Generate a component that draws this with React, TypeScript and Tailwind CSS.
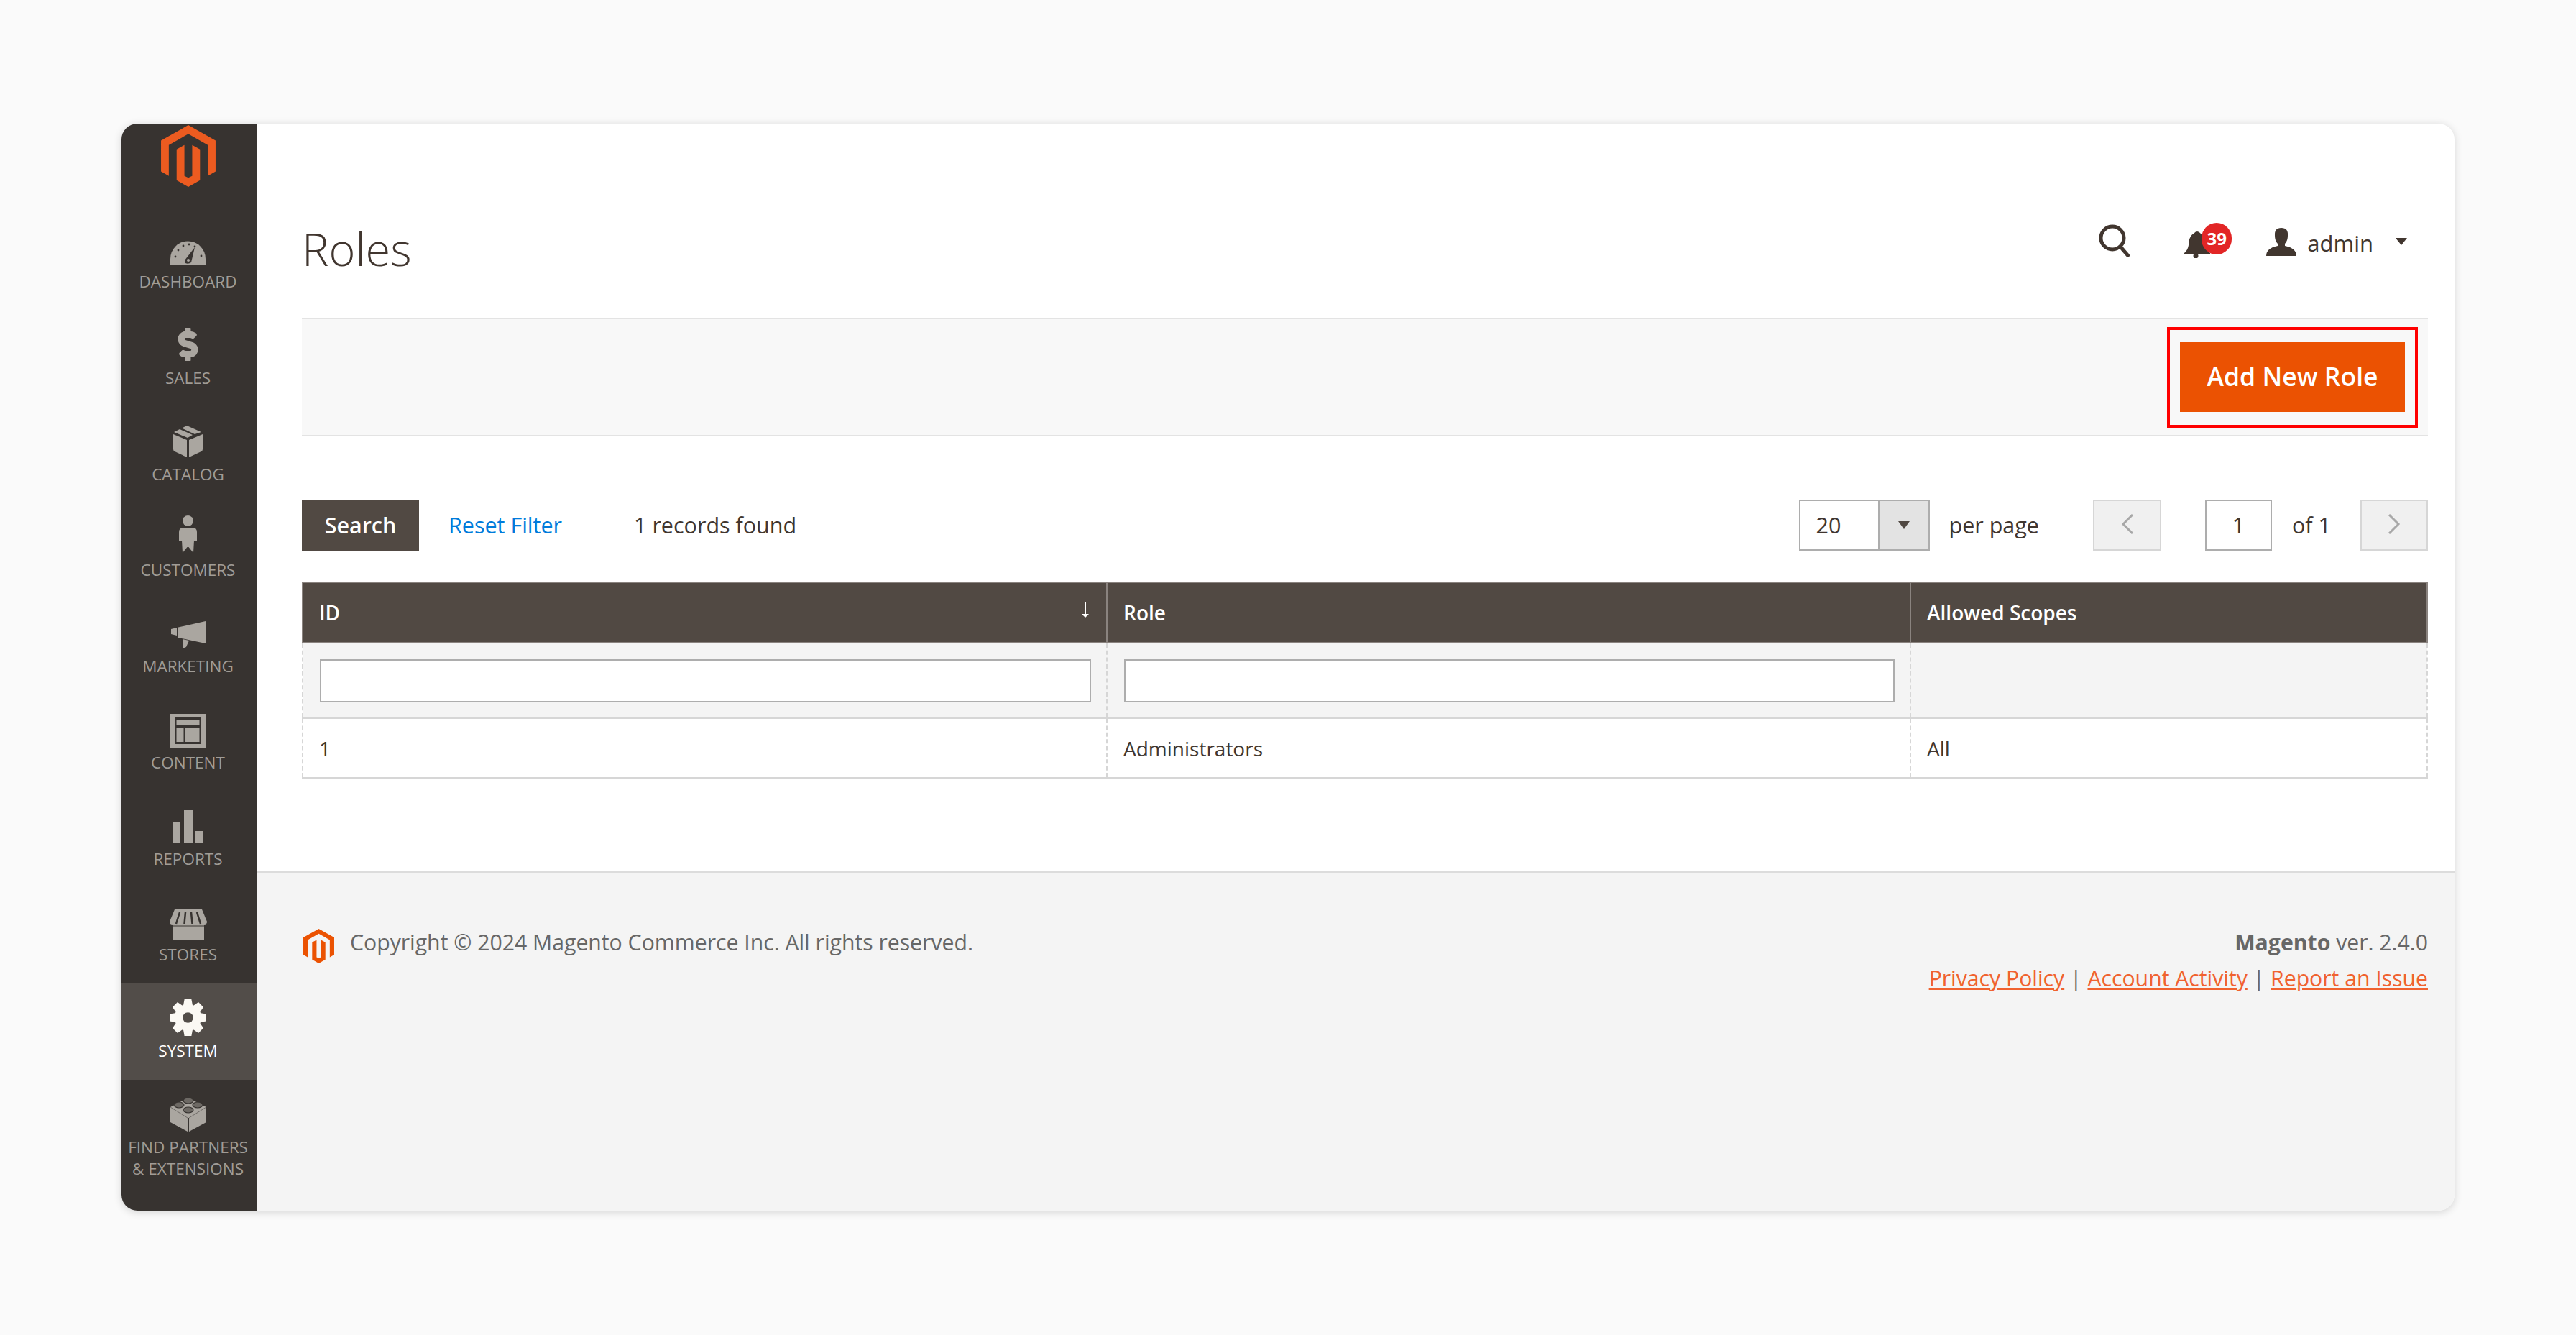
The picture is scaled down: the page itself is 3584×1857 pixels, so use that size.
import type { ReactNode } from "react";
import { FaDollarSign } from "react-icons/fa";

const ICON = "#aaa6a0";
const SIDE = "#373330";

function MagentoLogo({ className }: { className: string }) {
  return (
    <svg viewBox="1.6 0 20.8 24" preserveAspectRatio="none" className={className} fill="currentColor">
      <path d="M12 24l-4.455-2.572v-12l2.97-1.715v12.001L12 20.43l1.485-.715V7.713l2.97 1.715v12L12 24zM22.391 6v12l-2.969 1.714V7.713L12 3.43 4.574 7.713v12.001L1.609 18V6L12 0l10.391 6z" />
    </svg>
  );
}

function Dashboard() {
  return (
    <svg viewBox="0 0 49 33" className="w-[49px] h-[33px] mb-[3px]">
      <path d="M0 33V25A24.5 24.5 0 0 1 49 25V33Z" fill={ICON} />
      <g fill={SIDE}>
        <circle cx="7" cy="22" r="1.4" />
        <circle cx="11" cy="13" r="1.4" />
        <circle cx="18" cy="7" r="1.4" />
        <circle cx="26" cy="5" r="1.4" />
        <circle cx="34" cy="8" r="1.4" />
        <circle cx="43" cy="21" r="1.4" />
        <path d="M20 27L34 9 29 30Q25 33 21 31Z" />
      </g>
      <circle cx="25" cy="27" r="2" fill={ICON} />
    </svg>
  );
}

function Catalog() {
  return (
    <svg viewBox="0 0 41 44" className="w-[41px] h-[44px] mb-[3px]" fill={ICON}>
      <path d="M0 12L19 20V44L2 36Q0 35 0 33Z" />
      <path d="M41 12L22 20V44L39 36Q41 35 41 33Z" />
      <path d="M1 9L9 5 27 13 20 17ZM12 3.500L19 0 39 9 30 12Z" />
    </svg>
  );
}

function Customers() {
  return (
    <svg viewBox="0 0 25 52" className="w-[25px] h-[52px] mb-[3px]" fill={ICON}>
      <ellipse cx="12.500" cy="7.500" rx="7.500" ry="7.500" />
      <path d="M6 17H19Q25 17 25 23V35H21L20 52 13.500 44 11.500 44 5 52 4 35H0V23Q0 17 6 17Z" />
    </svg>
  );
}

function Marketing() {
  return (
    <svg viewBox="0 0 48 38" className="w-[48px] h-[38px] mb-[4px]" fill={ICON}>
      <path d="M0 11L8 9V20L0 18Z" />
      <path d="M10 8.500L48 0V31L10 23Z" />
      <path d="M16 25L25 27 21 36 16 38Z" />
    </svg>
  );
}

function Content() {
  return (
    <svg viewBox="0 0 49 47" className="w-[49px] h-[47px]">
      <rect width="49" height="47" fill={ICON} />
      <rect x="6" y="5" width="37" height="37" fill={SIDE} />
      <rect x="8.500" y="8" width="32" height="7" fill={ICON} />
      <rect x="8.500" y="19" width="10" height="20" fill={ICON} />
      <rect x="21" y="19" width="19.500" height="20" fill={ICON} />
    </svg>
  );
}

function Reports() {
  return (
    <svg viewBox="0 0 43 46" className="w-[43px] h-[46px] mb-[1px]" fill={ICON}>
      <rect y="16" width="10" height="30" />
      <rect x="16" width="12" height="46" />
      <rect x="32" y="29" width="11" height="17" />
    </svg>
  );
}

function Stores() {
  return (
    <svg viewBox="0 0 52 42" className="w-[52px] h-[42px]">
      <path d="M7 0H45L52 17Q52 21 48 21H4Q0 21 0 17Z" fill={ICON} />
      <rect x="4" y="17" width="44" height="25" fill={ICON} />
      <path d="M3 22H49V24H3Z" fill={SIDE} opacity="0.5" />
      <path d="M14 4L9 20M22 4L20.500 20M30 4L31.500 20M38 4L43 20" stroke={SIDE} strokeWidth="2.500" />
    </svg>
  );
}

function Gear() {
  const teeth = [0, 45, 90, 135, 180, 225, 270, 315];
  return (
    <svg viewBox="-26 -26 52 52" className="w-[51px] h-[51px]" fill="#fbf9f4">
      <circle r="19" />
      {teeth.map((deg) => (
        <path key={deg} d="M-5 -26H5L7 -15H-7Z" transform={`rotate(${deg})`} />
      ))}
      <circle r="7.500" fill="#524d49" />
    </svg>
  );
}

function Partners() {
  return (
    <svg viewBox="0 0 50 49" className="w-[50px] h-[49px] mb-[1px]">
      <path d="M0 15L25 2 50 15V36L26 49V30L24 30V49L0 36Z" fill={ICON} />
      <path d="M0 15L24 30M50 15L26 30" stroke={SIDE} strokeWidth="0.500" />
      <g fill="#6d6964" stroke={SIDE} strokeWidth="1.200">
        <ellipse cx="25" cy="6" rx="7" ry="4" />
        <ellipse cx="12" cy="12" rx="7" ry="4" />
        <ellipse cx="38" cy="12" rx="7" ry="4" />
        <ellipse cx="25" cy="19" rx="7" ry="4" />
      </g>
    </svg>
  );
}

const menu: { label: ReactNode; icon: ReactNode; active?: boolean }[] = [
  { label: "DASHBOARD", icon: <Dashboard /> },
  {
    label: "SALES",
    icon: <FaDollarSign stroke="currentColor" strokeWidth={24} className="w-[27px] h-[46px] mb-[3px] text-[#aaa6a0]" />,
  },
  { label: "CATALOG", icon: <Catalog /> },
  { label: "CUSTOMERS", icon: <Customers /> },
  { label: "MARKETING", icon: <Marketing /> },
  { label: "CONTENT", icon: <Content /> },
  { label: "REPORTS", icon: <Reports /> },
  { label: "STORES", icon: <Stores /> },
  { label: "SYSTEM", icon: <Gear />, active: true },
  { label: <>FIND PARTNERS<br />&amp; EXTENSIONS</>, icon: <Partners /> },
];

function Sidebar() {
  return (
    <aside className="w-[188px] shrink-0 bg-[#373330] flex flex-col">
      <div className="h-[126px] pr-[3px] flex flex-col items-center">
        <MagentoLogo className="mt-[2px] w-[76px] h-[86px] text-[#ec5b20]" />
        <div className="mt-auto w-[127px] h-[1px] bg-[#736e69]" />
      </div>
      {menu.map((item, i) => (
        <div
          key={i}
          className={`h-[133.75px] pt-[20px] pr-[3px] flex flex-col items-center ${item.active ? "bg-[#524d49]" : ""}`}
        >
          <div className="h-[53px] shrink-0 flex items-end justify-center">{item.icon}</div>
          <div
            className={`mt-[6px] shrink-0 text-center text-[22.5px] leading-[30px] whitespace-nowrap ${item.active ? "text-white" : "text-[#a09c96]"}`}
          >
            {item.label}
          </div>
        </div>
      ))}
    </aside>
  );
}

function Header() {
  return (
    <div className="h-[270px] flex justify-between">
      <h1 className="mt-[132px] text-[63px] leading-[84px] font-light text-[#41362f]">Roles</h1>
      <div className="mt-[139px] h-[48px] pr-[29px] flex items-center text-[#41362f]">
        <svg viewBox="0 0 43 46" className="w-[43px] h-[46px]" fill="none" stroke="currentColor">
          <circle cx="19" cy="19" r="16" strokeWidth="5" />
          <path d="M30 31L42 45" strokeWidth="5" />
        </svg>
        <div className="relative ml-[76px] w-[36px] h-[38px] mt-[10px]">
          <svg viewBox="0 0 36 38" className="w-[36px] h-[38px]" fill="currentColor">
            <path d="M13 4Q18 -2 23 4Q30 8 30 20Q31 27 36 31V33H0V31Q5 27 6 20Q6 8 13 4Z" />
            <circle cx="16" cy="35" r="3.500" />
          </svg>
          <span className="absolute left-[24px] top-[-11px] w-[42px] h-[44px] rounded-full bg-[#e22626] text-white font-bold text-[24px] leading-[44px] text-center">
            39
          </span>
        </div>
        <svg viewBox="0 0 42 39" className="ml-[78px] w-[42px] h-[39px] mt-[2px]" fill="currentColor">
          <path d="M21 0Q31 0 30 11Q30 18 26 22V25Q42 28 42 39H0Q0 28 16 25V22Q12 18 12 11Q11 0 21 0Z" />
        </svg>
        <span className="ml-[15px] text-[31px] leading-[40px] mt-[6px]">admin</span>
        <span className="ml-[31px] mt-[2px] w-0 h-0 border-x-[8px] border-x-transparent border-t-[10px] border-t-[#41362f]" />
      </div>
    </div>
  );
}

function Chevron({ dir }: { dir: "left" | "right" }) {
  return (
    <svg viewBox="0 0 18 28" className="w-[18px] h-[28px] mb-[4px]" fill="none" stroke="#a8a8a8" strokeWidth="3">
      <path d={dir === "left" ? "M16 1L3 14 16 27" : "M2 1L15 14 2 27"} />
    </svg>
  );
}

function Toolbar() {
  return (
    <div className="mt-[88px] h-[71px] flex items-center text-[30.5px] text-[#41362f]">
      <button className="w-[163px] h-[71px] bg-[#514943] text-white font-semibold">Search</button>
      <span className="ml-[41px] text-[#007bdb]">Reset Filter</span>
      <span className="ml-[100px]">1 records found</span>
      <div className="ml-auto flex items-center h-full">
        <div className="w-[182px] h-full flex border-2 border-[#adadad] bg-white">
          <span className="flex-1 pl-[22px] leading-[67px]">20</span>
          <span className="w-[70px] bg-[#e3e3e3] border-l-2 border-[#adadad] flex items-center justify-center">
            <span className="w-0 h-0 border-x-[8px] border-x-transparent border-t-[11px] border-t-[#514943]" />
          </span>
        </div>
        <span className="ml-[27px]">per page</span>
        <span className="ml-[75px] w-[95px] h-full bg-[#f0f0f0] border-2 border-[#d6d6d6] flex items-center justify-center">
          <Chevron dir="left" />
        </span>
        <span className="ml-[61px] w-[93px] h-full bg-white border-2 border-[#adadad] flex items-center justify-center">1</span>
        <span className="ml-[28px]">of 1</span>
        <span className="ml-[41px] w-[94px] h-full bg-[#f0f0f0] border-2 border-[#d6d6d6] flex items-center justify-center">
          <Chevron dir="right" />
        </span>
      </div>
    </div>
  );
}

function RolesTable() {
  return (
    <table className="mt-[43px] w-full table-fixed border-collapse text-[28px] text-[#41362f]">
      <colgroup>
        <col className="w-[1119px]" />
        <col className="w-[1118px]" />
        <col />
      </colgroup>
      <thead>
        <tr className="h-[84px] bg-[#514943] text-white text-left">
          <th className="relative px-[22px] font-semibold border-2 border-[#8a837f]">
            ID
            <svg viewBox="0 0 12 22" className="absolute right-[23px] top-[26px] w-[12px] h-[22px]" fill="none" stroke="#ffffff">
              <path d="M6 0V20" strokeWidth="2" />
              <path d="M1 17H11L6 22Z" fill="#ffffff" stroke="none" />
            </svg>
          </th>
          <th className="px-[22px] font-semibold border-2 border-[#8a837f]">Role</th>
          <th className="px-[22px] font-semibold border-2 border-[#8a837f]">Allowed Scopes</th>
        </tr>
      </thead>
      <tbody>
        <tr className="h-[105px] bg-[#f4f4f4]">
          <td className="pl-[23px] pr-[21px] border-x-2 border-x-[#d6d6d6] border-dashed">
            <input className="block w-full h-[60px] bg-white border-2 border-[#adadad]" />
          </td>
          <td className="pl-[23px] pr-[21px] border-x-2 border-x-[#d6d6d6] border-dashed">
            <input className="block w-full h-[60px] bg-white border-2 border-[#adadad]" />
          </td>
          <td className="border-x-2 border-x-[#d6d6d6] border-dashed" />
        </tr>
        <tr className="h-[83px] bg-white border-y-2 border-[#d6d6d6]">
          <td className="px-[22px] border-x-2 border-x-[#d6d6d6] border-dashed">1</td>
          <td className="px-[22px] border-x-2 border-x-[#d6d6d6] border-dashed">Administrators</td>
          <td className="px-[22px] border-x-2 border-x-[#d6d6d6] border-dashed">All</td>
        </tr>
      </tbody>
    </table>
  );
}

function Footer() {
  return (
    <footer className="flex-1 border-t-2 border-[#dcdcdc] bg-[#f4f4f4] pl-[65px] pr-[37px] pt-[72px] flex justify-between text-[30.2px] leading-[50px] text-[#676767]">
      <div className="flex items-start">
        <MagentoLogo className="mt-[6px] w-[43px] h-[48px] text-[#eb5202]" />
        <span className="ml-[22px]">Copyright © 2024 Magento Commerce Inc. All rights reserved.</span>
      </div>
      <div className="text-right">
        <div>
          <b className="font-bold">Magento</b> ver. 2.4.0
        </div>
        <div className="text-[#f0622f]">
          <u>Privacy Policy</u> <span className="text-[#676767]">|</span> <u> Account Activity</u>{" "}
          <span className="text-[#676767]">|</span> <u>Report an Issue</u>
        </div>
      </div>
    </footer>
  );
}

export default function App() {
  return (
    <div className="min-h-[1857px] bg-[#fafafa] pt-[172px] pl-[169px] font-['Open_Sans',sans-serif]">
      <div className="w-[3246px] h-[1512px] flex rounded-[22px] overflow-hidden bg-white shadow-[0_2px_12px_rgba(0,0,0,0.16)]">
        <Sidebar />
        <main className="flex-1 flex flex-col min-w-0">
          <div className="pl-[63px] pr-[37px] h-[1040px]">
            <Header />
            <div className="h-[165px] bg-[#f8f8f8] border-y-2 border-[#e3e3e3] flex items-center justify-end pr-[14px]">
              <div className="border-4 border-[#ff0000] px-[14px] pt-[17px] pb-[18px]">
                <button className="block w-[313px] h-[97px] bg-[#eb5202] text-white text-[35.5px] font-semibold">
                  Add New Role
                </button>
              </div>
            </div>
            <Toolbar />
            <RolesTable />
          </div>
          <Footer />
        </main>
      </div>
    </div>
  );
}
